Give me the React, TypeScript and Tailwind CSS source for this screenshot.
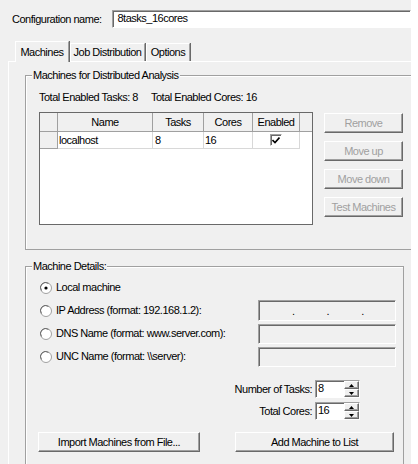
import React from "react";

const sunken =
  "border-t border-l border-b border-r border-t-[#a0a0a0] border-l-[#a0a0a0] border-b-white border-r-white shadow-[inset_1px_1px_0_#696969]";
const raised =
  "border-t border-l border-b border-r border-t-white border-l-white border-b-[#696969] border-r-[#696969] shadow-[inset_-1px_-1px_0_#a0a0a0]";

function Radio({ checked = false }: { checked?: boolean }) {
  return (
    <svg width="12" height="12" viewBox="0 0 12 12" className="shrink-0">
      <circle cx="6" cy="6" r="5.5" fill="#fff" stroke="#a0a0a0" />
      <path d="M1.5 8.5 A5 5 0 0 1 8.5 1.5" fill="none" stroke="#696969" />
      {checked && <circle cx="6" cy="6" r="1.6" fill="#000" />}
    </svg>
  );
}

function Btn({ label, disabled, w }: { label: string; disabled?: boolean; w: string }) {
  return (
    <div
      className={`${raised} ${w} h-[20px] bg-[#f0f0f0] flex items-center justify-center ${
        disabled ? "text-[#a0a0a0]" : "text-black"
      }`}
    >
      {label}
    </div>
  );
}

function Spin({ value }: { value: string }) {
  return (
    <div className={`${sunken} w-[45px] h-[18px] bg-white flex items-stretch`}>
      <span className="flex-1 pl-[2px] leading-[15px]">{value}</span>
      <div className="w-[15px] flex flex-col">
        <div className={`${raised} flex-1 bg-[#f0f0f0] flex items-center justify-center`}>
          <svg width="5" height="3" viewBox="0 0 5 3">
            <path d="M2.5 0 L5 3 L0 3 Z" fill="#000" />
          </svg>
        </div>
        <div className={`${raised} flex-1 bg-[#f0f0f0] flex items-center justify-center`}>
          <svg width="5" height="3" viewBox="0 0 5 3">
            <path d="M0 0 L5 0 L2.5 3 Z" fill="#000" />
          </svg>
        </div>
      </div>
    </div>
  );
}

function Group({ title, className, children }: { title: string; className: string; children: React.ReactNode }) {
  return (
    <div className={`relative border border-[#a0a0a0] shadow-[inset_1px_1px_0_#fff] ${className}`}>
      <span className="absolute top-[-7px] left-[6px] px-[1px] bg-[#f0f0f0] leading-[13px]">{title}</span>
      {children}
    </div>
  );
}

export default function App() {
  return (
    <div className="w-[418px] h-[464px] bg-white flex font-['Liberation_Sans',Arial,sans-serif] text-[11px] tracking-[-0.5px] text-black">
      <div className="w-[411px] h-full bg-[#f0f0f0] overflow-hidden flex flex-col">
        {/* config name */}
        <div className="flex items-center pt-[10px]">
          <span className="ml-[12px] w-[101px] leading-[13px]">Configuration name:</span>
          <div className={`${sunken} w-[300px] h-[18px] bg-white pl-[4px] leading-[15px]`}>8tasks_16cores</div>
        </div>

        {/* tabs */}
        <div className="ml-[8px] mt-[13px] pl-[7px] h-[20px] flex items-end gap-[1px]">
          <div className="relative z-10 mb-[-1px] w-[54px] h-[21px] bg-[#f0f0f0] border-t border-l border-white border-r border-r-[#a0a0a0] shadow-[1px_0_0_#696969] flex items-center justify-center">
            Machines
          </div>
          <div className="w-[75px] h-[18px] border-t border-l border-white border-r border-r-[#a0a0a0] shadow-[1px_0_0_#696969] flex items-center justify-center">
            Job Distribution
          </div>
          <div className="w-[44px] h-[18px] border-t border-l border-white border-r border-r-[#a0a0a0] shadow-[1px_0_0_#696969] flex items-center justify-center">
            Options
          </div>
        </div>

        {/* tab page */}
        <div className="ml-[8px] flex-1 border-t border-l border-white pl-[16px] pt-[13px]">
          <Group title="Machines for Distributed Analysis" className="w-[395px] h-[175px] pl-[13px] pt-[15px]">
            <div className="flex leading-[13px]">
              <span className="w-[112px]">Total Enabled Tasks: 8</span>
              <span>Total Enabled Cores: 16</span>
            </div>
            <div className="flex mt-[8px]">
              {/* grid */}
              <div className="w-[274px] h-[113px] border border-[#696969] bg-white flex flex-col">
                <div className="h-[19px] flex bg-[#f0f0f0] border-b border-[#a0a0a0]">
                  <div className="w-[18px] border-r border-[#a0a0a0]" />
                  <div className="w-[95px] border-r border-[#a0a0a0] flex items-center justify-center">Name</div>
                  <div className="w-[51px] border-r border-[#a0a0a0] flex items-center justify-center">Tasks</div>
                  <div className="w-[49px] border-r border-[#a0a0a0] flex items-center justify-center">Cores</div>
                  <div className="w-[47px] border-r border-[#a0a0a0] flex items-center justify-center">Enabled</div>
                  <div className="flex-1" />
                </div>
                <div className="h-[17px] flex">
                  <div className="w-[18px] bg-[#f0f0f0] border-r border-b border-[#a0a0a0]" />
                  <div className="w-[95px] border-r border-b border-[#d8d8d8] pl-[1px] flex items-center">localhost</div>
                  <div className="w-[51px] border-r border-b border-[#d8d8d8] pl-[2px] flex items-center">8</div>
                  <div className="w-[49px] border-r border-b border-[#d8d8d8] pl-[1px] flex items-center">16</div>
                  <div className="w-[47px] border-r border-b border-[#d8d8d8] flex items-center justify-center">
                    <div className={`${sunken} w-[12px] h-[12px] bg-white flex items-center justify-center`}>
                      <svg width="8" height="7" viewBox="0 0 8 7">
                        <path d="M0.5 3 L3 5.5 L7.5 0.5" fill="none" stroke="#000" strokeWidth="1.6" />
                      </svg>
                    </div>
                  </div>
                </div>
              </div>
              {/* side buttons */}
              <div className="ml-[11px] mt-[1px] flex flex-col gap-[8px]">
                <Btn label="Remove" disabled w="w-[79px]" />
                <Btn label="Move up" disabled w="w-[79px]" />
                <Btn label="Move down" disabled w="w-[79px]" />
                <Btn label="Test Machines" disabled w="w-[79px]" />
              </div>
            </div>
          </Group>

          <Group title="Machine Details:" className="mt-[16px] w-[379px] h-[220px] pt-[9px] pl-[14px] pr-[7px]">
            <div className="h-[23px] flex items-center gap-[4px]">
              <Radio checked />
              <span>Local machine</span>
            </div>
            <div className="h-[23px] flex items-center gap-[4px]">
              <Radio />
              <span>IP Address (format: 192.168.1.2):</span>
              <div className={`${sunken} ml-auto w-[138px] h-[21px] bg-[#f0f0f0] flex items-center pl-[33px] gap-[32px] leading-[10px]`}>
                <span>.</span>
                <span>.</span>
                <span>.</span>
              </div>
            </div>
            <div className="h-[23px] flex items-center gap-[4px]">
              <Radio />
              <span>DNS Name (format: www.server.com):</span>
              <div className={`${sunken} ml-auto w-[138px] h-[20px] bg-[#f0f0f0]`} />
            </div>
            <div className="h-[23px] flex items-center gap-[4px]">
              <Radio />
              <span>{"UNC Name (format: \\\\server):"}</span>
              <div className={`${sunken} ml-auto w-[138px] h-[20px] bg-[#f0f0f0]`} />
            </div>

            <div className="mt-[12px] flex flex-col gap-[4px] pr-[36px]">
              <div className="flex items-center justify-end gap-[3px]">
                <span>Number of Tasks:</span>
                <Spin value="8" />
              </div>
              <div className="flex items-center justify-end gap-[3px]">
                <span>Total Cores:</span>
                <Spin value="16" />
              </div>
            </div>

            <div className="mt-[12px] flex items-center ml-[-2px]">
              <Btn label="Import Machines from File..." w="w-[162px]" />
              <div className="ml-auto mr-[2px]">
                <Btn label="Add Machine to List" w="w-[159px]" />
              </div>
            </div>
          </Group>
        </div>
      </div>
    </div>
  );
}
